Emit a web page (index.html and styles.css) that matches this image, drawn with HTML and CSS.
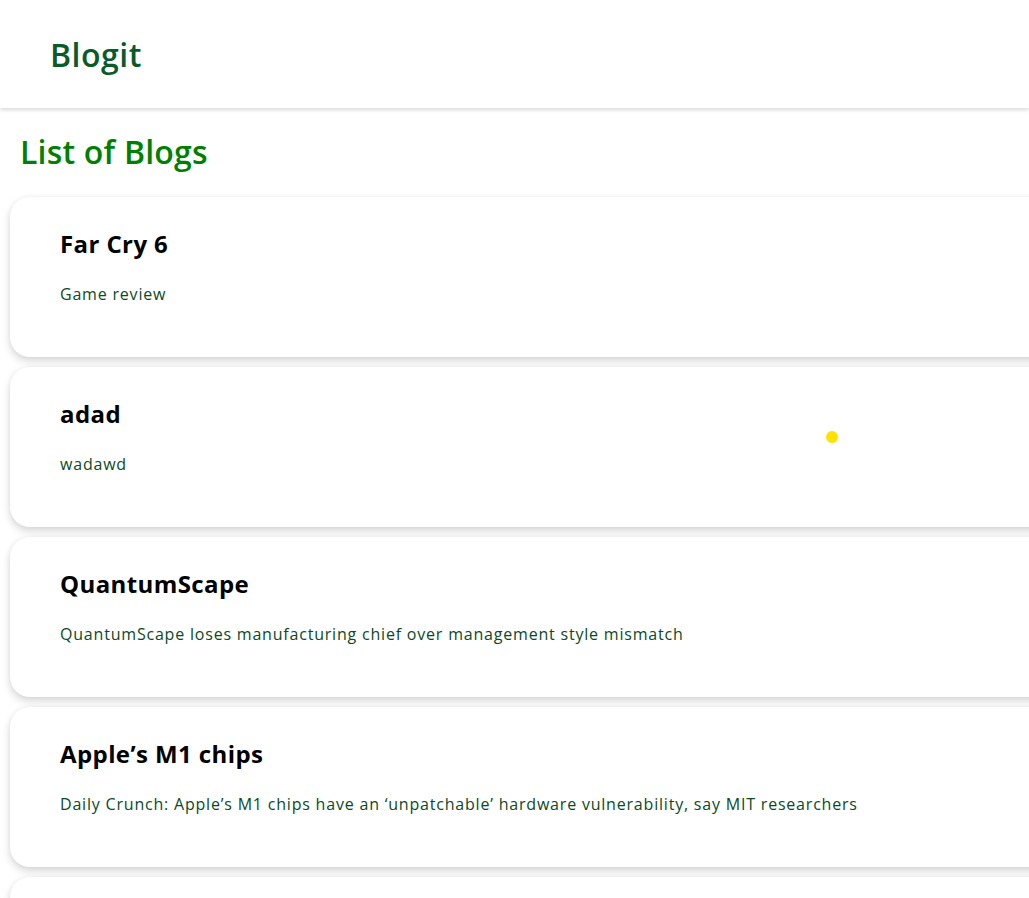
FILE: index.html
```html
<!DOCTYPE html>
<html lang="en">
<head>
<meta charset="utf-8">
<title>Blogit</title>
<link rel="stylesheet" href="styles.css">
</head>
<body>
<header class="navbar">
  <div class="brand">Blogit</div>
</header>
<main class="content">
  <h1 class="page-title">List of Blogs</h1>
  <div class="blog-list">
    <article class="blog-card">
      <h2 class="blog-title">Far Cry 6</h2>
      <p class="blog-desc">Game review</p>
    </article>
    <article class="blog-card">
      <h2 class="blog-title">adad</h2>
      <p class="blog-desc">wadawd</p>
    </article>
    <article class="blog-card">
      <h2 class="blog-title">QuantumScape</h2>
      <p class="blog-desc">QuantumScape loses manufacturing chief over management style mismatch</p>
    </article>
    <article class="blog-card">
      <h2 class="blog-title">Apple’s M1 chips</h2>
      <p class="blog-desc">Daily Crunch: Apple’s M1 chips have an ‘unpatchable’ hardware vulnerability, say MIT researchers</p>
    </article>
    <article class="blog-card">
      <h2 class="blog-title">&nbsp;</h2>
      <p class="blog-desc">&nbsp;</p>
    </article>
  </div>
</main>
<div class="cursor-dot"></div>
</body>
</html>
```
FILE: styles.css
```css
html, body {
  margin: 0;
  padding: 0;
  background: #ffffff;
  overflow: hidden;
}
body {
  font-family: "Open Sans", "Noto Sans", sans-serif;
  position: relative;
  height: 898px;
}
.navbar {
  height: 108px;
  display: flex;
  align-items: center;
  padding-left: 50px;
  background: #ffffff;
  box-shadow: 0 2px 4px rgba(0, 0, 0, 0.15);
  position: relative;
  z-index: 1;
}
.brand {
  font-size: 32px;
  font-weight: 600;
  color: #0a5a2a;
  letter-spacing: 0.5px;
}
.content {
  padding: 0 0 0 10px;
}
.page-title {
  margin: 0;
  padding: 22px 0 0 10px;
  font-size: 32px;
  line-height: 44px;
  font-weight: 600;
  color: #008000;
  letter-spacing: 0.2px;
}
.blog-list {
  display: flex;
  flex-direction: column;
  gap: 10px;
  margin-top: 23px;
  margin-right: -40px;
}
.blog-card {
  background: #ffffff;
  border-radius: 20px;
  box-shadow: 0 4px 8px rgba(0, 0, 0, 0.16), 0 0 4px rgba(0, 0, 0, 0.04);
  height: 160px;
  box-sizing: border-box;
  padding: 29px 50px 0;
}
.blog-title {
  margin: 0;
  font-size: 24px;
  line-height: 36px;
  font-weight: 700;
  color: #000000;
  letter-spacing: 0.4px;
}
.blog-desc {
  margin: 21px 0 0;
  font-size: 16px;
  line-height: 22px;
  color: #0b4a1e;
  letter-spacing: 0.8px;
}
.cursor-dot {
  position: absolute;
  left: 826px;
  top: 431px;
  width: 12px;
  height: 12px;
  border-radius: 50%;
  background: #ffe200;
}
```
